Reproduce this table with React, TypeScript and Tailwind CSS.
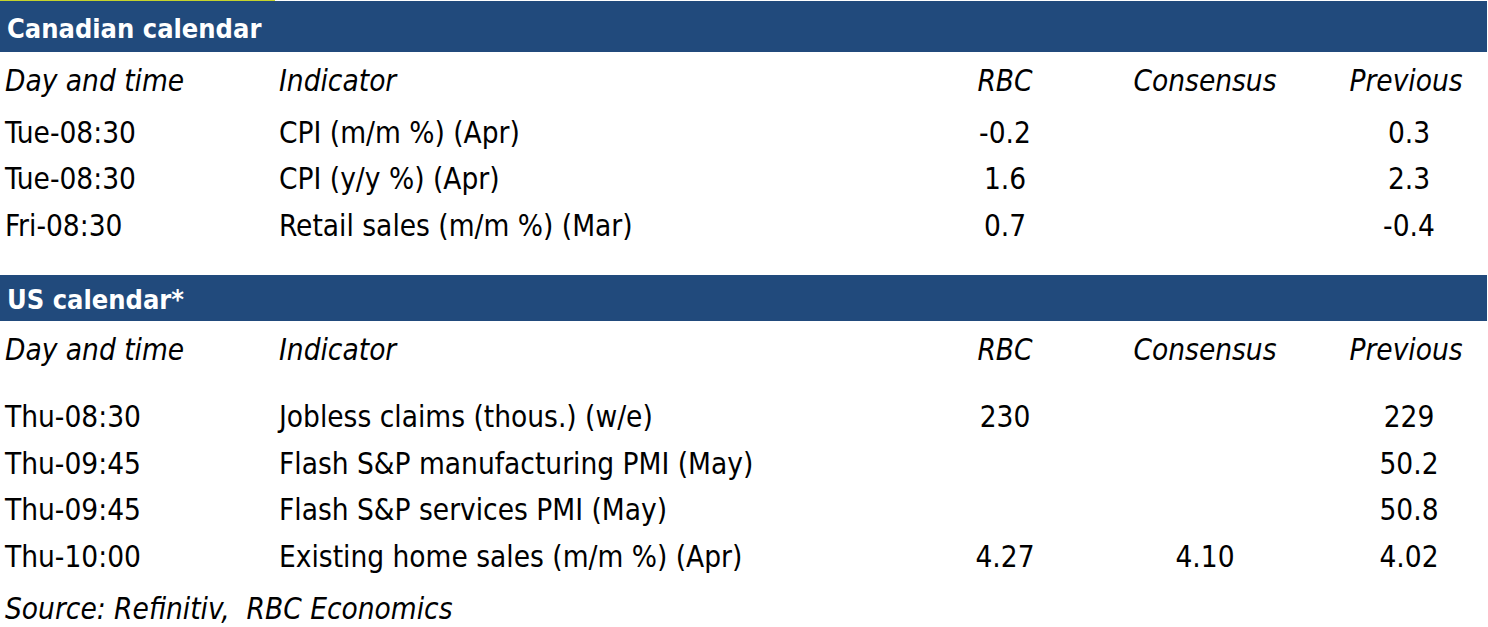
import React from 'react';

type Row = { day: string; indicator: string; rbc?: string; consensus?: string; previous?: string };

const canadaRows: Row[] = [
  { day: 'Tue-08:30', indicator: 'CPI (m/m %) (Apr)', rbc: '-0.2', previous: '0.3' },
  { day: 'Tue-08:30', indicator: 'CPI (y/y %) (Apr)', rbc: '1.6', previous: '2.3' },
  { day: 'Fri-08:30', indicator: 'Retail sales (m/m %) (Mar)', rbc: '0.7', previous: '-0.4' },
];

const usRows: Row[] = [
  { day: 'Thu-08:30', indicator: 'Jobless claims (thous.) (w/e)', rbc: '230', previous: '229' },
  { day: 'Thu-09:45', indicator: 'Flash S&P manufacturing PMI (May)', previous: '50.2' },
  { day: 'Thu-09:45', indicator: 'Flash S&P services PMI (May)', previous: '50.8' },
  { day: 'Thu-10:00', indicator: 'Existing home sales (m/m %) (Apr)', rbc: '4.27', consensus: '4.10', previous: '4.02' },
];

const cols = 'grid grid-cols-[274px_651px_150px_250px_158px] pl-[5px]';

const SectionBar: React.FC<{ title: string; className?: string }> = ({ title, className }) => (
  <div className={`bg-[#214a7c] mr-px pl-[7px] pt-[4px] font-bold text-white text-[27px] flex items-center ${className ?? ''}`}>
    {title}
  </div>
);

const HeaderRow: React.FC<{ className?: string }> = ({ className }) => (
  <div className={`${cols} italic items-center pt-[3px] ${className ?? ''}`}>
    <div>Day and time</div>
    <div>Indicator</div>
    <div className="text-center">RBC</div>
    <div className="text-center">Consensus</div>
    <div className="text-center pr-[6px]">Previous</div>
  </div>
);

const DataRow: React.FC<{ row: Row }> = ({ row }) => (
  <div className={`${cols} h-[46.5px] items-center pt-[4px]`}>
    <div>{row.day}</div>
    <div>{row.indicator}</div>
    <div className="text-center">{row.rbc}</div>
    <div className="text-center">{row.consensus}</div>
    <div className="text-center">{row.previous}</div>
  </div>
);

const App: React.FC = () => {
  return (
    <div
      className="w-[1488px] h-[627px] bg-white text-black text-[29.5px] leading-none overflow-hidden"
      style={{ fontFamily: '"DejaVu Sans Condensed", "DejaVu Sans", sans-serif' }}
    >
      <div className="h-px w-[275px] bg-[#c5d32c]" />

      {/* Canadian calendar */}
      <SectionBar title="Canadian calendar" className="h-[51px]" />
      <HeaderRow className="h-[56px]" />
      {canadaRows.map((r, i) => (
        <DataRow key={i} row={r} />
      ))}

      {/* US calendar */}
      <SectionBar title="US calendar*" className="h-[46px] mt-[27px]" />
      <HeaderRow className="h-[58px]" />
      <div className="h-[14px]" />
      {usRows.map((r, i) => (
        <DataRow key={i} row={r} />
      ))}

      <div className={`${cols} h-[59px] items-center italic pt-[3px]`}>
        <div className="col-span-3">Source: Refinitiv,&nbsp; RBC Economics</div>
      </div>
    </div>
  );
};

export default App;
